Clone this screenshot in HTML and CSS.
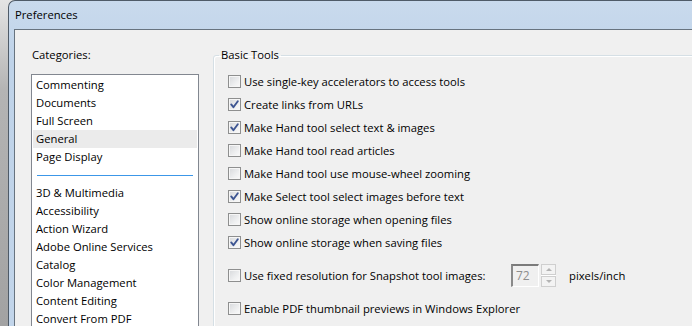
FILE: index.html
```html
<!DOCTYPE html>
<html lang="en">
<head>
    <meta charset="UTF-8">
    <title>Preferences</title>
    <link rel="stylesheet" href="styles.css">
</head>
<body>
    <div class="window">
        <div class="titlebar">Preferences</div>
        <div class="client">
            <div class="categories">
                <div class="label">Categories:</div>
                <ul class="list">
                    <li>Commenting</li>
                    <li>Documents</li>
                    <li>Full Screen</li>
                    <li class="selected">General</li>
                    <li>Page Display</li>
                    <li class="sep"></li>
                    <li>3D &amp; Multimedia</li>
                    <li>Accessibility</li>
                    <li>Action Wizard</li>
                    <li>Adobe Online Services</li>
                    <li>Catalog</li>
                    <li>Color Management</li>
                    <li>Content Editing</li>
                    <li>Convert From PDF</li>
                </ul>
            </div>

            <fieldset class="group">
                <legend>Basic Tools</legend>
                <div class="rows">
                    <div class="row"><span class="cb"></span>Use single-key accelerators to access tools</div>
                    <div class="row"><span class="cb checked"><svg viewBox="0 0 13 13"><path d="M3.2 6.4 L5.4 9.2 L9.8 3.2"/></svg></span>Create links from URLs</div>
                    <div class="row"><span class="cb checked"><svg viewBox="0 0 13 13"><path d="M3.2 6.4 L5.4 9.2 L9.8 3.2"/></svg></span>Make Hand tool select text &amp; images</div>
                    <div class="row"><span class="cb"></span>Make Hand tool read articles</div>
                    <div class="row"><span class="cb"></span>Make Hand tool use mouse-wheel zooming</div>
                    <div class="row"><span class="cb checked"><svg viewBox="0 0 13 13"><path d="M3.2 6.4 L5.4 9.2 L9.8 3.2"/></svg></span>Make Select tool select images before text</div>
                    <div class="row"><span class="cb"></span>Show online storage when opening files</div>
                    <div class="row"><span class="cb checked"><svg viewBox="0 0 13 13"><path d="M3.2 6.4 L5.4 9.2 L9.8 3.2"/></svg></span>Show online storage when saving files</div>

                    <div class="row snap">
                        <span class="cb"></span>
                        <span class="snap-label">Use fixed resolution for Snapshot tool images:</span>
                        <span class="num">72</span>
                        <span class="spin"><span class="up"></span><span class="down"></span></span>
                        <span class="unit">pixels/inch</span>
                    </div>

                    <div class="row thumbs"><span class="cb"></span>Enable PDF thumbnail previews in Windows Explorer</div>
                </div>
            </fieldset>
        </div>
    </div>
</body>
</html>
```

FILE: styles.css
```css
html, body {
    margin: 0;
    height: 100%;
    overflow: hidden;
}

body {
    font-family: "Open Sans", "Noto Sans", sans-serif;
    font-size: 11.25px;
    color: #000;
    background: linear-gradient(to bottom, #e4e4e4 0, #b4b4b4 90px, #a2a2a2 326px);
}

.window {
    display: flex;
    flex-direction: column;
    box-sizing: border-box;
    margin-left: 8px;
    height: 100%;
    overflow: hidden;
    background: linear-gradient(to bottom, #c9daed, #bfd3e9 60px, #c2d5ea);
    border: 1px solid #4f5b68;
    border-right: none;
    border-bottom: none;
    border-radius: 7px 0 0 0;
}

.titlebar {
    height: 28px;
    line-height: 28px;
    padding-left: 6px;
    flex: none;
}

.client {
    flex: 1;
    display: flex;
    align-items: flex-start;
    min-height: 0;
    overflow: hidden;
    margin-left: 5px;
    padding: 17px 0 0 16px;
    background: #f0f0f0;
    border-top: 1px solid #67737f;
    border-left: 1px solid #67737f;
}

.categories {
    width: 168px;
    flex: none;
}

.label {
    height: 16px;
    line-height: 16px;
    margin-bottom: 11px;
    padding-left: 1px;
}

.list {
    list-style: none;
    margin: 0;
    padding: 1px 0;
    height: 280px;
    background: #fff;
    border: 1px solid #828790;
}

.list li {
    height: 18px;
    line-height: 18px;
    margin: 0 1px;
    padding-left: 3px;
    white-space: nowrap;
}

.list .selected {
    background: #ebebeb;
}

.list .sep {
    background: linear-gradient(#3c97e8, #3c97e8) no-repeat 4px 9px / 156px 1px;
}

.group {
    flex: none;
    width: 500px;
    margin: 0 0 0 14px;
    padding: 0;
    height: 300px;
    border: 1px solid #d5dfe5;
    border-radius: 3px;
    box-shadow: inset 1px 1px 0 #fff;
}

.group legend {
    margin-left: 5px;
    padding: 0 2px;
    line-height: 16px;
}

.rows {
    padding: 7px 0 0 14px;
}

.row {
    display: flex;
    align-items: center;
    height: 23px;
    white-space: nowrap;
}

.cb {
    flex: none;
    position: relative;
    width: 13px;
    height: 13px;
    box-sizing: border-box;
    margin-right: 3px;
    border: 1px solid #8e8f8f;
    background: linear-gradient(135deg, #d6d8db 0, #eeeff0 60%, #fbfbfb 100%);
    box-shadow: inset 0 0 0 1px #f6f6f6;
}

.cb svg {
    position: absolute;
    left: -1px;
    top: -1px;
    width: 13px;
    height: 13px;
}

.cb path {
    fill: none;
    stroke: #3d5592;
    stroke-width: 1.9;
    stroke-linecap: round;
    stroke-linejoin: round;
}

.snap {
    height: 24px;
    margin-top: 9px;
}

.snap-label {
    width: 267px;
}

.num {
    width: 28px;
    height: 23px;
    box-sizing: border-box;
    padding-left: 3px;
    line-height: 20px;
    font-size: 12px;
    color: #8d8d8d;
    background: #f0f0f0;
    border-top: 2px solid #7b7b7b;
    border-left: 2px solid #8a8a8a;
    border-right: 1px solid #fff;
    border-bottom: 1px solid #fff;
}

.spin {
    display: flex;
    flex-direction: column;
    gap: 1px;
    width: 15px;
    height: 23px;
    margin-left: 2px;
    box-sizing: border-box;
    background: #fff;
}

.spin span {
    flex: 1;
    position: relative;
    border: 1px solid #cfcfcf;
    background: #f3f3f3;
}

.spin span::after {
    content: "";
    position: absolute;
    left: 4px;
    top: 3px;
    border-left: 3px solid transparent;
    border-right: 3px solid transparent;
}

.spin .up::after {
    border-bottom: 3px solid #b3b3b3;
}

.spin .down::after {
    border-top: 3px solid #b3b3b3;
}

.unit {
    margin-left: 13px;
}

.thumbs {
    margin-top: 10px;
}
```
